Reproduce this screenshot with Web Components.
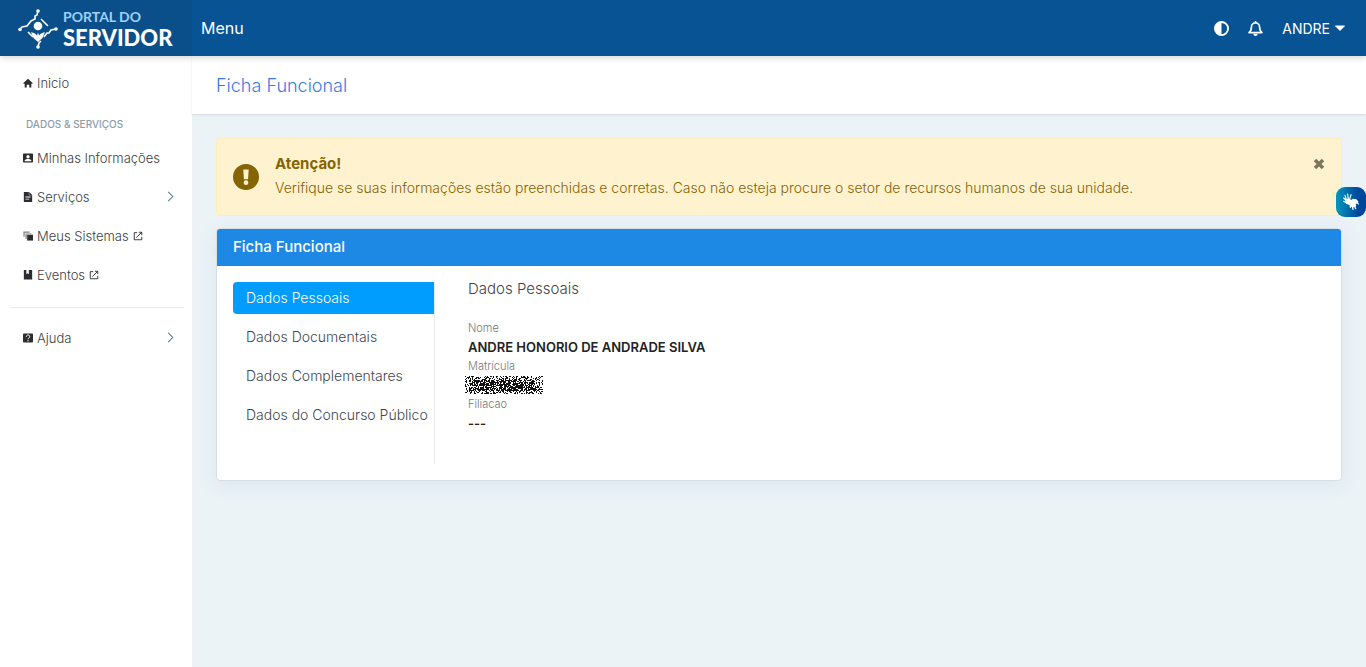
<!DOCTYPE html>
<html lang="pt-BR">
<head>
<meta charset="utf-8">
<meta name="viewport" content="width=device-width, initial-scale=1">
<title>Portal do Servidor - Ficha Funcional</title>
<style>
  html, body { margin: 0; min-height: 100%; }
  body { background: #ebf3f7; color: #3e4043; font-family: Inter, "Open Sans", sans-serif; font-size: 13px; font-weight: 300; }
</style>
</head>
<body>
<portal-app></portal-app>

<script>
const ICONS = {
  home: '<path d="M1 12 12 2l11 10v2h-3v9h-5v-7H9v7H4v-9H1z"/>',
  person: '<path fill-rule="evenodd" d="M2 1h20a2 2 0 0 1 2 2v18a2 2 0 0 1-2 2H2a2 2 0 0 1-2-2V3a2 2 0 0 1 2-2zm10 4a4 4 0 1 0 0 8 4 4 0 0 0 0-8zM4 18v2h16v-2c0-5-16-5-16 0z"/>',
  file: '<path fill-rule="evenodd" d="M2 0h12v8h8v16H2zm13 0 7 7h-7zM6 11v2h12v-2zm0 5v2h9v-2z"/>',
  layers: '<path d="M10 9h14v14H10z"/><path d="M6 19V6h15v2H9v11zM1 14V1h15v3H4v10z" opacity=".6"/>',
  book: '<path d="M2 0h6v10l3-2 3 2V0h8v23H2z"/>',
  help: '<rect x="0" y="1" width="24" height="22" rx="2"/><path d="M8 9c0-6 9-5 8 0 0 3-4 3-4 6m0 2v3" fill="none" stroke="#fff" stroke-width="2.4"/>',
  external: '<path d="M10 4H3v17h18v-7M14 3h7v7M21 3 8 16" fill="none" stroke="currentColor" stroke-width="2.2"/>',
  chevron: '<path d="m7 2 10 10L7 22" fill="none" stroke="currentColor" stroke-width="2.2"/>',
  contrast: '<path fill-rule="evenodd" d="M12 0a12 12 0 1 1 0 24 12 12 0 0 1 0-24zm0 3v18a9 9 0 0 0 0-18z"/>',
  bell: '<path d="M1.500 18.500h21c-3-2-4-4-4-9 0-4-3-6.500-6.500-6.500S5.500 5.500 5.500 9.500c0 5-1 7-4 9zM12 0v3" fill="none" stroke="currentColor" stroke-width="2.600" stroke-linejoin="round"/><path d="M8.500 20.500h7a3.500 3.500 0 0 1-7 0z"/>',
  caret: '<path d="M1 7h22L12 18z" stroke="currentColor" stroke-width="2" stroke-linejoin="round"/>',
  alert: '<path fill-rule="evenodd" d="M12 0a12 12 0 1 1 0 24 12 12 0 0 1 0-24zM9.500 5l.6 9h3.800l.6-9zM12 15a2.200 2.200 0 1 0 0 4.400 2.200 2.200 0 0 0 0-4.400z"/>',
  close: '<path d="m4 4 16 16M20 4 4 20" fill="none" stroke="currentColor" stroke-width="7"/>',
  hands: '<g fill="none" stroke="currentColor" stroke-linecap="round"><path d="M5 8 3 2m5 6L7 0m3 8 2-7M4 9 1 6m5 8-5-3" stroke-width="1.700"/><path d="m14 18 1 5m2-6 2 5m-8-5v3m10-8 2 3" stroke-width="2"/></g><path d="M4 8c3-2 6-2 8 1l3-2 5 1 3 3-1 3-3 1 1 3-4 2-4-1-3-3-4-1c-2-2-2-5-1-7z"/>'
};

function define(name, markup, setup) {
  const template = document.createElement('template');
  template.innerHTML = '<style>*{box-sizing:border-box}</style>' + markup;
  customElements.define(name, class extends HTMLElement {
    connectedCallback() {
      if (this.shadowRoot) return;
      const root = this.attachShadow({ mode: 'open' });
      root.append(template.content.cloneNode(true));
      if (setup) setup(this, root);
    }
  });
}

define('ui-icon', `
  <style>
    :host { display: inline-block; flex: none; width: 10px; height: 10px; }
    svg { display: block; width: 100%; height: 100%; fill: currentColor; overflow: visible; }
  </style>
  <svg viewBox="0 0 24 24" aria-hidden="true"></svg>`,
  (host, root) => { root.querySelector('svg').innerHTML = ICONS[host.getAttribute('name')]; });

define('portal-logo', `
  <style>
    :host { display: block; }
    a { display: flex; align-items: center; gap: 5px; color: #fff; text-decoration: none; }
    svg { width: 40px; height: 40px; flex: none; }
    span { display: flex; flex-direction: column; font-family: Lato, sans-serif; }
    small { font-size: 14px; line-height: 17px; font-weight: 700; color: #9fd0ff; }
    strong { font-size: 22px; line-height: 26px; font-weight: 900; }
  </style>
  <a href="#inicio">
    <svg viewBox="0 0 40 40" fill="none" stroke="#fff" stroke-width="1.600" aria-hidden="true">
      <circle cx="20" cy="17" r="4.300" fill="#fff" stroke="none"/>
      <path d="M20 2 19 6 17 7 17 10 13 12 9 17 4 18 2 20M23 10l7 7M38 20l-5 1-2 3-2 0-3 4M10 23l5 5M20 38l1-4 2-2"/>
      <path d="M13 23l4 1.500 2 2 1-3 1 3 2-2 4-1.500-2.500 6-4.500 4-4.500-4z" fill="#fff" stroke="none"/>
      <g fill="#fff" stroke="none"><circle cx="20" cy="2" r="1.800"/><circle cx="38" cy="20" r="1.800"/><circle cx="2" cy="20.500" r="1.800"/><circle cx="20" cy="38" r="1.800"/></g>
    </svg>
    <span><small>PORTAL DO</small><strong>SERVIDOR</strong></span>
  </a>`);

define('portal-header', `
  <style>
    :host { display: flex; position: relative; z-index: 2; height: 56px; align-items: center; background: #085394; color: #fff; box-shadow: 0 2px 6px rgba(0,0,0,.16); }
    .brand { align-self: stretch; width: 192px; display: flex; align-items: center; padding: 2px 0 0 18px; background: #0b4f8a; }
    button { border: 0; padding: 0; background: none; color: inherit; font: inherit; font-weight: 400; cursor: pointer; display: flex; align-items: center; }
    .menu { margin-left: 9px; font-size: 16px; }
    .tools { display: flex; align-items: center; gap: 19px; margin-left: auto; padding-right: 21px; }
    .tools ui-icon { width: 15px; height: 15px; }
    .user { gap: 5px; font-size: 14px; }
    .tools .user ui-icon { width: 10px; height: 10px; }
  </style>
  <div class="brand"><portal-logo></portal-logo></div>
  <button class="menu">Menu</button>
  <div class="tools">
    <button aria-label="Contraste"><ui-icon name="contrast"></ui-icon></button>
    <button aria-label="Notificações"><ui-icon name="bell"></ui-icon></button>
    <button class="user">ANDRE<ui-icon name="caret"></ui-icon></button>
  </div>`);

define('nav-item', `
  <style>
    :host { display: block; }
    a { display: flex; align-items: center; gap: 4px; height: 39px; padding: 0 16px 0 23px; color: #3e4043; text-decoration: none; }
    ui-icon { color: #2b2d30; }
    .chevron { width: 11px; height: 11px; margin-left: auto; color: #54788c; }
  </style>
  <a href="#"><ui-icon class="lead"></ui-icon><slot></slot></a>`,
  (host, root) => {
    const link = root.querySelector('a');
    const lead = document.createElement('ui-icon');
    lead.setAttribute('name', host.getAttribute('icon'));
    link.querySelector('.lead').replaceWith(lead);
    for (const extra of ['external', 'chevron']) {
      if (!host.hasAttribute(extra)) continue;
      const icon = document.createElement('ui-icon');
      icon.className = extra;
      icon.setAttribute('name', extra);
      link.append(icon);
    }
  });

define('portal-sidebar', `
  <style>
    :host { display: block; width: 192px; flex: none; padding-top: 7px; background: #fff; }
    h2 { margin: 0; padding: 8px 26px 0; font-size: 10px; font-weight: 500; line-height: 28px; color: #8a9caa; }
    hr { margin: 13px 8px 10px 10px; border: 0; border-top: 1px solid #e9eaec; }
  </style>
  <nav>
    <nav-item icon="home">Inicio</nav-item>
    <h2>DADOS &amp; SERVIÇOS</h2>
    <nav-item icon="person">Minhas Informações</nav-item>
    <nav-item icon="file" chevron>Serviços</nav-item>
    <nav-item icon="layers" external>Meus Sistemas</nav-item>
    <nav-item icon="book" external>Eventos</nav-item>
    <hr>
    <nav-item icon="help" chevron>Ajuda</nav-item>
  </nav>`);

define('alert-box', `
  <style>
    :host { display: flex; align-items: center; gap: 16px; padding: 13px 16px 14px; border: 1px solid #ffeeba; border-radius: 4px; background: #fff2cf; color: #856404; }
    ui-icon { width: 26px; height: 26px; }
    .text { flex: 1; }
    h2 { margin: 0; font-size: 15px; line-height: 23px; font-weight: 700; }
    p { margin: 0; font-size: 14px; line-height: 26px; }
    button { align-self: flex-start; display: flex; margin-top: 6px; padding: 0; border: 0; background: none; color: #7d765f; cursor: pointer; }
    button ui-icon { width: 12px; height: 12px; }
  </style>
  <ui-icon name="alert"></ui-icon>
  <div class="text"><h2><slot name="title"></slot></h2><p><slot></slot></p></div>
  <button aria-label="Fechar"><ui-icon name="close"></ui-icon></button>`);

define('redacted-value', `
  <style>
    :host { display: block; width: 78px; height: 18px; margin-left: -3px; }
    svg { display: block; width: 100%; height: 100%; }
  </style>
  <svg viewBox="0 0 78 18" shape-rendering="crispEdges" role="img" aria-label="Matrícula oculta"><path fill="#111"/></svg>`,
  (host, root) => {
    let seed = 7, d = '';
    for (let y = 0; y < 18; y++) for (let x = 0; x < 78; x++) {
      seed = (seed * 1664525 + 1013904223) >>> 0;
      const core = y > 3 && y < 15 && x > 3 && x < 73;
      if (seed / 4294967296 < (core ? 0.66 : 0.4)) d += `M${x} ${y}h1v1h-1z`;
    }
    root.querySelector('path').setAttribute('d', d);
  });

define('employee-card', `
  <style>
    :host { display: block; border: 1px solid #d5dfe4; border-radius: 4px; background: #fff; box-shadow: 0 4px 20px rgba(70,110,140,.1); overflow: hidden; }
    header { padding: 0 16px; background: #1e88e5; color: #fff; font-size: 15px; line-height: 36px; padding-bottom: 1px; font-weight: 500; }
    .body { display: flex; gap: 33px; padding: 15px 16px 16px; padding-top: 16px; }
    nav { flex: none; width: 202px; min-height: 182px; display: flex; flex-direction: column; gap: 7px; border-right: 1px solid #e8eaec; }
    nav a { padding: 0 0 0 13px; line-height: 32px; font-size: 14px; color: #3e4852; text-decoration: none; border-radius: 4px 0 0 4px; white-space: nowrap; }
    nav a[aria-current] { background: #009dff; color: #fff; }
    section { flex: 1; }
    h3 { margin: 0 0 24px; font-size: 15px; line-height: 14px; font-weight: 300; color: #37474f; }
    dl { margin: 0; }
    dt { font-size: 11px; line-height: 16px; color: #777; }
    dd { display: flex; align-items: center; margin: 0; height: 22px; font-size: 13px; line-height: 22px; font-weight: 600; color: #222; }
  </style>
  <header>Ficha Funcional</header>
  <div class="body">
    <nav aria-label="Dados">
      <a href="#pessoais" aria-current="page">Dados Pessoais</a>
      <a href="#documentais">Dados Documentais</a>
      <a href="#complementares">Dados Complementares</a>
      <a href="#concurso">Dados do Concurso Público</a>
    </nav>
    <section>
      <h3>Dados Pessoais</h3>
      <dl>
        <dt>Nome</dt><dd>ANDRE HONORIO DE ANDRADE SILVA</dd>
        <dt>Matrícula</dt><dd><redacted-value></redacted-value></dd>
        <dt>Filiacao</dt><dd>---</dd>
      </dl>
    </section>
  </div>`);

define('libras-button', `
  <style>
    :host { position: fixed; right: 0; top: 187px; z-index: 3; }
    button { display: flex; align-items: center; justify-content: center; width: 30px; height: 30px; padding: 0; border: 0; border-radius: 9px; background: linear-gradient(90deg, #0096bd, #00479b 75%); color: #fff; cursor: pointer; }
    ui-icon { width: 16px; height: 16px; }
  </style>
  <button aria-label="Libras"><ui-icon name="hands"></ui-icon></button>`);

define('portal-app', `
  <style>
    :host { display: flex; flex-direction: column; min-height: 100vh; }
    .layout { display: flex; flex: 1; }
    main { flex: 1; min-width: 0; }
    h1 { margin: 0; padding: 1px 24px; height: 58px; background: #fff; color: #3b78e7; font-size: 18px; line-height: 58px; font-weight: 300; box-shadow: 0 1px 2px rgba(60,90,110,.15); }
    .content { display: flex; flex-direction: column; gap: 12px; padding: 24px; }
  </style>
  <portal-header></portal-header>
  <div class="layout">
    <portal-sidebar></portal-sidebar>
    <main>
      <h1>Ficha Funcional</h1>
      <div class="content">
        <alert-box><span slot="title">Atenção!</span>Verifique se suas informações estão preenchidas e corretas. Caso não esteja procure o setor de recursos humanos de sua unidade.</alert-box>
        <employee-card></employee-card>
      </div>
    </main>
  </div>
  <libras-button></libras-button>`);
</script>
</body>
</html>
